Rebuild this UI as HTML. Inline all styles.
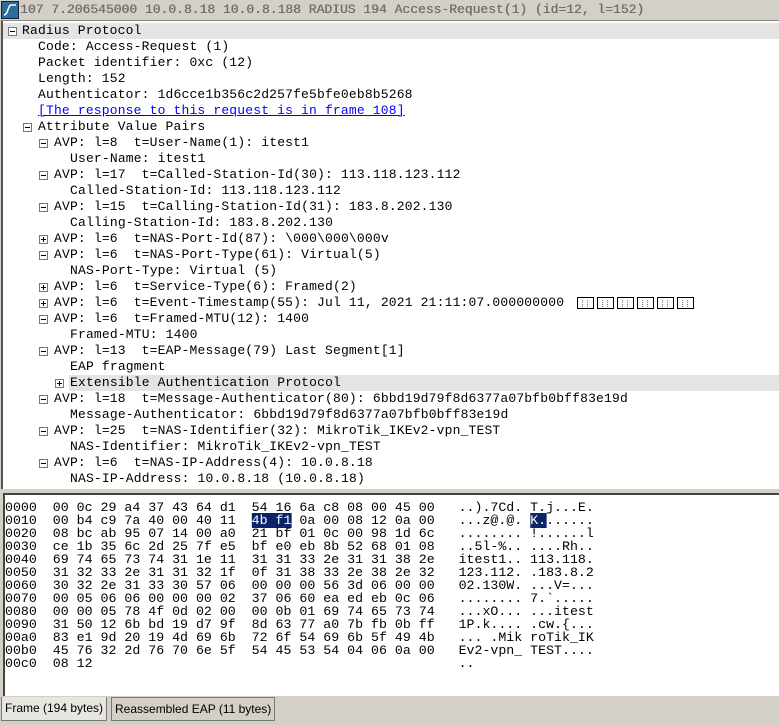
<!DOCTYPE html>
<html><head><style>
body{margin:0;width:779px;height:725px;background:#d4d0c8;overflow:hidden;font-family:"Liberation Mono",monospace;position:relative}
#title{position:absolute;left:0;top:0;width:779px;height:19px;background:#d4d0c8;color:#6f6f6f;font-size:13px;line-height:19px;white-space:pre;text-shadow:0.4px 0 0 #6f6f6f}
#icon{position:absolute;left:1px;top:1px;width:16px;height:16px;background:#2a6d9c;border:1px solid #123}
#tree{position:absolute;left:1px;top:20px;width:778px;height:469px;background:#fff;border-left:2px solid #555;border-top:1px solid #888;box-sizing:border-box}
.r{position:absolute;left:0;width:776px;height:16px;font-size:13px;line-height:16px;white-space:pre;color:#000;letter-spacing:0.17px}
.g{background:#e4e4e4}
.b{position:absolute;width:7px;height:7px;border:1px solid #777;top:4px;background:#fff}
.b:after{content:"";position:absolute;left:1px;top:3px;width:5px;height:1px;background:#000}
.p:before{content:"";position:absolute;left:3px;top:1px;width:1px;height:5px;background:#000}
a{color:#00f;text-decoration:underline}
#hex{position:absolute;left:3px;top:493px;width:776px;height:203px;background:#fff;border-left:2px solid #444;border-top:2px solid #444;box-sizing:border-box}
.h{position:absolute;left:0px;font-size:13px;line-height:13px;white-space:pre;transform:scaleX(1.02);transform-origin:0 0;color:#000}
.s{background:#0a246a;color:#fff}
#tabs{position:absolute;left:0;top:697px;width:779px;height:28px}
.t{position:absolute;top:0;height:22px;font-family:"Liberation Sans",sans-serif;font-size:12px;line-height:22px;padding:0 3px;border:1px solid #777;border-top:none;background:#d4d0c8}
.bx{position:absolute;top:2px;width:17px;height:12px;border:1px solid #000;box-sizing:border-box}
.bx:before,.bx:after{content:"";position:absolute;top:2px;width:3px;height:7px;border-left:1px dotted #777}
.bx:before{left:4px}.bx:after{left:9px}
</style></head><body>
<div id="title"><div id="icon"><svg width="16" height="16"><path d="M2 13 C6 13 6 3 9 3 L14 3" stroke="#fff" fill="none" stroke-width="1.5"/></svg></div><span style="position:absolute;left:20px">107 7.206545000 10.0.8.18 10.0.8.188 RADIUS 194 Access-Request(1) (id=12, l=152)</span></div>
<div id="tree">
<div class="r g" style="top:2px"><i class="b" style="left:5px"></i><span style="position:absolute;left:19px">Radius Protocol</span></div>
<div class="r" style="top:18px"><span style="position:absolute;left:35px">Code: Access-Request (1)</span></div>
<div class="r" style="top:34px"><span style="position:absolute;left:35px">Packet identifier: 0xc (12)</span></div>
<div class="r" style="top:50px"><span style="position:absolute;left:35px">Length: 152</span></div>
<div class="r" style="top:66px"><span style="position:absolute;left:35px">Authenticator: 1d6cce1b356c2d257fe5bfe0eb8b5268</span></div>
<div class="r" style="top:82px"><span style="position:absolute;left:35px"><a>[The response to this request is in frame 108]</a></span></div>
<div class="r" style="top:98px"><i class="b" style="left:20px"></i><span style="position:absolute;left:35px">Attribute Value Pairs</span></div>
<div class="r" style="top:114px"><i class="b" style="left:36px"></i><span style="position:absolute;left:51px">AVP: l=8  t=User-Name(1): itest1</span></div>
<div class="r" style="top:130px"><span style="position:absolute;left:67px">User-Name: itest1</span></div>
<div class="r" style="top:146px"><i class="b" style="left:36px"></i><span style="position:absolute;left:51px">AVP: l=17  t=Called-Station-Id(30): 113.118.123.112</span></div>
<div class="r" style="top:162px"><span style="position:absolute;left:67px">Called-Station-Id: 113.118.123.112</span></div>
<div class="r" style="top:178px"><i class="b" style="left:36px"></i><span style="position:absolute;left:51px">AVP: l=15  t=Calling-Station-Id(31): 183.8.202.130</span></div>
<div class="r" style="top:194px"><span style="position:absolute;left:67px">Calling-Station-Id: 183.8.202.130</span></div>
<div class="r" style="top:210px"><i class="b p" style="left:36px"></i><span style="position:absolute;left:51px">AVP: l=6  t=NAS-Port-Id(87): \000\000\000v</span></div>
<div class="r" style="top:226px"><i class="b" style="left:36px"></i><span style="position:absolute;left:51px">AVP: l=6  t=NAS-Port-Type(61): Virtual(5)</span></div>
<div class="r" style="top:242px"><span style="position:absolute;left:67px">NAS-Port-Type: Virtual (5)</span></div>
<div class="r" style="top:258px"><i class="b p" style="left:36px"></i><span style="position:absolute;left:51px">AVP: l=6  t=Service-Type(6): Framed(2)</span></div>
<div class="r" style="top:274px"><i class="b p" style="left:36px"></i><span style="position:absolute;left:51px">AVP: l=6  t=Event-Timestamp(55): Jul 11, 2021 21:11:07.000000000</span>
<i class="bx" style="left:574px"></i><i class="bx" style="left:594px"></i><i class="bx" style="left:614px"></i><i class="bx" style="left:634px"></i><i class="bx" style="left:654px"></i><i class="bx" style="left:674px"></i></div>
<div class="r" style="top:290px"><i class="b" style="left:36px"></i><span style="position:absolute;left:51px">AVP: l=6  t=Framed-MTU(12): 1400</span></div>
<div class="r" style="top:306px"><span style="position:absolute;left:67px">Framed-MTU: 1400</span></div>
<div class="r" style="top:322px"><i class="b" style="left:36px"></i><span style="position:absolute;left:51px">AVP: l=13  t=EAP-Message(79) Last Segment[1]</span></div>
<div class="r" style="top:338px"><span style="position:absolute;left:67px">EAP fragment</span></div>
<div class="r" style="top:354px"><div class="g" style="position:absolute;left:66px;right:0;height:16px"></div><i class="b p" style="left:52px"></i><span style="position:absolute;left:67px">Extensible Authentication Protocol</span></div>
<div class="r" style="top:370px"><i class="b" style="left:36px"></i><span style="position:absolute;left:51px">AVP: l=18  t=Message-Authenticator(80): 6bbd19d79f8d6377a07bfb0bff83e19d</span></div>
<div class="r" style="top:386px"><span style="position:absolute;left:67px">Message-Authenticator: 6bbd19d79f8d6377a07bfb0bff83e19d</span></div>
<div class="r" style="top:402px"><i class="b" style="left:36px"></i><span style="position:absolute;left:51px">AVP: l=25  t=NAS-Identifier(32): MikroTik_IKEv2-vpn_TEST</span></div>
<div class="r" style="top:418px"><span style="position:absolute;left:67px">NAS-Identifier: MikroTik_IKEv2-vpn_TEST</span></div>
<div class="r" style="top:434px"><i class="b" style="left:36px"></i><span style="position:absolute;left:51px">AVP: l=6  t=NAS-IP-Address(4): 10.0.8.18</span></div>
<div class="r" style="top:450px"><span style="position:absolute;left:67px">NAS-IP-Address: 10.0.8.18 (10.0.8.18)</span></div>
</div>
<div id="hex">
<div class="h" style="top:6px">0000  00 0c 29 a4 37 43 64 d1  54 16 6a c8 08 00 45 00   ..).7Cd. T.j...E.
0010  00 b4 c9 7a 40 00 40 11  <span class="s">4b f1</span> 0a 00 08 12 0a 00   ...z@.@. <span class="s">K.</span>......
0020  08 bc ab 95 07 14 00 a0  21 bf 01 0c 00 98 1d 6c   ........ !......l
0030  ce 1b 35 6c 2d 25 7f e5  bf e0 eb 8b 52 68 01 08   ..5l-%.. ....Rh..
0040  69 74 65 73 74 31 1e 11  31 31 33 2e 31 31 38 2e   itest1.. 113.118.
0050  31 32 33 2e 31 31 32 1f  0f 31 38 33 2e 38 2e 32   123.112. .183.8.2
0060  30 32 2e 31 33 30 57 06  00 00 00 56 3d 06 00 00   02.130W. ...V=...
0070  00 05 06 06 00 00 00 02  37 06 60 ea ed eb 0c 06   ........ 7.`.....
0080  00 00 05 78 4f 0d 02 00  00 0b 01 69 74 65 73 74   ...xO... ...itest
0090  31 50 12 6b bd 19 d7 9f  8d 63 77 a0 7b fb 0b ff   1P.k.... .cw.{...
00a0  83 e1 9d 20 19 4d 69 6b  72 6f 54 69 6b 5f 49 4b   ... .Mik roTik_IK
00b0  45 76 32 2d 76 70 6e 5f  54 45 53 54 04 06 0a 00   Ev2-vpn_ TEST....
00c0  08 12                                              ..</div>
</div>
<div id="tabs">
<div class="t" style="left:1px;background:#e8e6e0;height:23px">Frame (194 bytes)</div>
<div class="t" style="left:111px;border-top:1px solid #777">Reassembled EAP (11 bytes)</div>
</div>
</body></html>
